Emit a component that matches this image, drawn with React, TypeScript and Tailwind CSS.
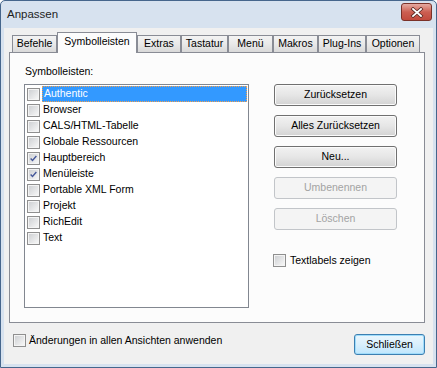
import React from 'react';

const font = { fontFamily: '"Liberation Sans", Arial, sans-serif' };

const tabs: [string, number][] = [
  ['Befehle', 45],
  ['Symbolleisten', 80],
  ['Extras', 44],
  ['Tastatur', 47],
  ['Menü', 45],
  ['Makros', 45],
  ['Plug-Ins', 48],
  ['Optionen', 54],
];

const toolbars: [string, boolean][] = [
  ['Authentic', false],
  ['Browser', false],
  ['CALS/HTML-Tabelle', false],
  ['Globale Ressourcen', false],
  ['Hauptbereich', true],
  ['Menüleiste', true],
  ['Portable XML Form', false],
  ['Projekt', false],
  ['RichEdit', false],
  ['Text', false],
];

const Checkbox = ({ checked = false }: { checked?: boolean }) => (
  <div className="w-[13px] h-[13px] shrink-0 border border-[#8f8f8f] bg-[#f4f4f4] p-px">
    <div className="w-full h-full bg-gradient-to-br from-[#cfd1d4] to-[#f6f6f6] flex items-center justify-center">
      {checked && (
        <svg width="11" height="11" viewBox="0 0 11 11">
          <path d="M2 5.5 L4.3 8 L9 2.5" fill="none" stroke="#46589a" strokeWidth="1.7" />
        </svg>
      )}
    </div>
  </div>
);

const Button = ({ label, disabled = false }: { label: string; disabled?: boolean }) => (
  <div
    className={
      disabled
        ? 'w-[123px] h-[22px] rounded-[3px] border border-[#c2c5c9] bg-[#f4f4f4] text-[#a3a3a3] flex items-center justify-center'
        : 'w-[123px] h-[22px] rounded-[3px] border border-[#707070] bg-gradient-to-b from-[#f2f2f2] via-[#e6e6e6] to-[#d3d3d3] text-black flex items-center justify-center shadow-[inset_0_0_0_1px_#fbfbfb]'
    }
  >
    {label}
  </div>
);

export default function App() {
  return (
    <div style={font} className="w-[437px] h-[368px] flex flex-col bg-[#d7e2ef] border border-[#46668c] text-[10.5px] text-black rounded-t-[5px] overflow-hidden">
      {/* title bar */}
      <div className="h-[27px] shrink-0 flex items-center justify-between pl-[6px] pr-[4px]">
        <span className="text-[11.5px] text-[#1e1e1e]">Anpassen</span>
        <div className="w-[31px] h-[18px] mb-[5px] rounded-[3px] border border-[#7a3128] bg-gradient-to-b from-[#e4aaa1] via-[#cc5f52] to-[#c24a3d] flex items-center justify-center">
          <svg width="14" height="11" viewBox="0 0 14 11">
            <path d="M3 2 L11 9 M11 2 L3 9" stroke="#5a2a24" strokeWidth="3.4" strokeLinecap="square" />
            <path d="M3 2 L11 9 M11 2 L3 9" stroke="#ffffff" strokeWidth="1.8" strokeLinecap="square" />
          </svg>
        </div>
      </div>

      {/* dialog body */}
      <div className="flex-1 mx-[3px] mb-[3px] bg-[#f0f0f0] pl-[5px] pt-[4px] flex flex-col">
        {/* tab strip */}
        <div className="h-[20px] flex items-end pl-[3px]">
          {tabs.map(([name, w]) =>
            name === 'Symbolleisten' ? (
              <div
                key={name}
                style={{ width: w }}
                className="h-[21px] -mb-px relative z-10 border border-b-0 border-[#898c95] bg-[#fcfcfc] flex items-center justify-center pb-[2px]"
              >
                {name}
              </div>
            ) : (
              <div
                key={name}
                style={{ width: w }}
                className="h-[17px] border border-b-0 border-[#898c95] bg-gradient-to-b from-[#f3f3f3] via-[#e9e9e9] to-[#d9d9d9] flex items-center justify-center"
              >
                {name}
              </div>
            )
          )}
        </div>

        {/* panel */}
        <div className="w-[416px] h-[271px] border border-[#898c95] bg-[#fcfcfc] flex pl-[14px]">
          <div className="flex flex-col pt-[12px]">
            <div className="h-[13px] leading-[13px] pl-px">Symbolleisten:</div>
            <div className="mt-[6px] w-[225px] h-[224px] border border-[#828790] bg-white pl-[2px] pt-px">
              {toolbars.map(([name, checked], i) => (
                <div key={name} className="h-[16px] flex items-center">
                  <Checkbox checked={checked} />
                  {i === 0 ? (
                    <div className="ml-[2px] mr-px flex-1 h-[16px] bg-[#3399ff] text-white border border-dotted border-[#f7a04a] flex items-center pl-px">
                      {name}
                    </div>
                  ) : (
                    <div className="ml-[3px]">{name}</div>
                  )}
                </div>
              ))}
            </div>
          </div>

          <div className="ml-[25px] pt-[31px] flex flex-col gap-[9px]">
            <Button label="Zurücksetzen" />
            <Button label="Alles Zurücksetzen" />
            <Button label="Neu..." />
            <Button label="Umbenennen" disabled />
            <Button label="Löschen" disabled />
            <div className="mt-[14px] -ml-px flex items-center gap-[4px]">
              <Checkbox />
              <span>Textlabels zeigen</span>
            </div>
          </div>
        </div>

        {/* bottom row */}
        <div className="w-[416px] mt-[11px] flex items-start justify-between">
          <div className="ml-[4px] flex items-center gap-[3px] h-[13px]">
            <Checkbox />
            <span>Änderungen in allen Ansichten anwenden</span>
          </div>
          <div className="w-[71px] h-[21px] rounded-[3px] border border-[#3c7fb1] bg-gradient-to-b from-[#eaf6fd] via-[#d9effc] to-[#bee6fd] shadow-[inset_0_0_0_1px_#9fdcfb] flex items-center justify-center">
            Schließen
          </div>
        </div>
      </div>
    </div>
  );
}
